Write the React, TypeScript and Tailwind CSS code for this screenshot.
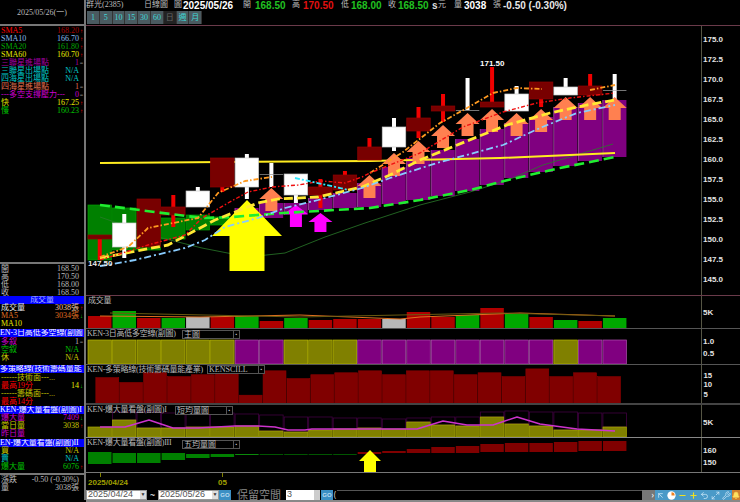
import { ReactNode } from "react";
import { ArrowUpLeft, Bell, Maximize2, Minus, Plus, Undo2, Wrench } from "lucide-react";

const ming = "font-['Liberation_Serif','Noto_Sans_CJK_TC',serif]";
const barX = (i: number) => 88 + 24.52 * i;
const midX = (i: number) => barX(i) + 11.75;

// 側欄一列
const Row = ({ label, value, mark, color, valueColor }: { label: string; value?: string; mark?: string; color: string; valueColor?: string }) => (
  <div className="flex h-[8px] w-[84px] items-center justify-between pl-[1px] text-[8px] leading-[8px] whitespace-nowrap">
    <span className={color}>{label}</span>
    <span className={"flex items-center " + (valueColor ?? color)}>
      {value}
      <span className={"w-[5px] text-center text-[6px] " + (mark === "↑" ? "text-[#ff0000]" : mark === "↓" ? "text-[#00d000]" : "text-[#999]")}>{mark}</span>
    </span>
  </div>
);

const Head = ({ children, center }: { children: ReactNode; center?: boolean }) => (
  <div className={"h-[8px] w-[84px] overflow-hidden whitespace-nowrap bg-[#0000ff] text-[8px] leading-[8px] tracking-[-0.1px] text-white " + (center ? "text-center" : "")}>{children}</div>
);

const Sidebar = () => (
  <aside className={"flex h-[500px] w-[86px] shrink-0 flex-col border-r-2 border-[#777] " + ming}>
    <div className="flex h-[26px] w-[84px] items-center justify-center border-b-2 border-[#777] pt-[1px] text-[8px] text-[#bbb]">2025/05/26(一)</div>
    <div className="h-[236px] pt-[1px]">
      <Row label="SMA5" value="168.20" mark="↑" color="text-[#ff0000]" valueColor="text-[#a00000]" />
      <Row label="SMA10" value="166.70" mark="↑" color="text-[#88bbee]" />
      <Row label="SMA20" value="161.80" mark="↑" color="text-[#00aa00]" />
      <Row label="SMA60" value="160.70" mark="↑" color="text-[#e8e800]" />
      <Row label="三聯星進場點" value="1" mark="=" color="text-[#a000a0]" />
      <Row label="三聯星出場點" value="N/A" color="text-[#00c8c8]" />
      <Row label="四海星出場點" value="N/A" color="text-[#00c8c8]" />
      <Row label="四海星進場點" value="1" mark="=" color="text-[#e07050]" />
      <Row label="---多空支撐壓力---" value="0" mark="=" color="text-[#d000d0]" />
      <Row label="快" value="167.25" mark="↑" color="text-[#e8e800]" />
      <Row label="慢" value="160.23" mark="↑" color="text-[#00c000]" />
    </div>
    <div className="h-[34px] border-t-2 border-[#777] pt-[1px]">
      <Row label="開" value="168.50" color="text-[#bbb]" />
      <Row label="高" value="170.50" color="text-[#bbb]" />
      <Row label="低" value="168.00" color="text-[#bbb]" />
      <Row label="收" value="168.50" color="text-[#bbb]" />
    </div>
    <div className="h-[33px]">
      <Head center><span className="text-[#aab8ff]">成交量</span></Head>
      <Row label="成交量" value="3038張" mark="↑" color="text-[#e8e8e8]" valueColor="text-[#f0c0a0]" />
      <Row label="MA5" value="3034張" mark="↓" color="text-[#e07020]" />
      <Row label="MA10" color="text-[#e8e800]" />
    </div>
    <div className="h-[36px]">
      <Head>EN-3日高低多空線(副圖</Head>
      <div className="h-[1px]" />
      <Row label="多叙" value="1" mark="=" color="text-[#d000d0]" valueColor="text-[#bbb]" />
      <Row label="空叙" value="N/A" color="text-[#00c000]" />
      <Row label="休" value="N/A" color="text-[#c8c800]" />
    </div>
    <div className="h-[40px]">
      <Head>多策略線(技術籌碼量能</Head>
      <div className="h-[1px]" />
      <Row label="------技術面---..." color="text-[#c8c800]" />
      <Row label="最高19分" value="14" mark="↓" color="text-[#ff0000]" valueColor="text-[#e8e800]" />
      <Row label="------籌碼面---..." color="text-[#c8c800]" />
      <Row label="最高14分" color="text-[#ff0000]" />
    </div>
    <div className="h-[33px] pt-[1px]">
      <Head>KEN-爆大量看盤(副圖)I</Head>
      <Row label="爆大量" value="7409" mark="↓" color="text-[#d000d0]" />
      <Row label="當日量" value="3038" mark="↑" color="text-[#c8c800]" />
      <Row label="昨日量" color="text-[#d000d0]" />
    </div>
    <div className="h-[35px] pt-[1px]">
      <Head>EN-爆大量看盤(副圖)II</Head>
      <Row label="買" value="N/A" color="text-[#c8c800]" />
      <Row label="賣" value="N/A" color="text-[#00c8c8]" />
      <Row label="爆大量" value="6076" mark="↑" color="text-[#00c000]" />
    </div>
    <div className="border-t-2 border-[#777] pt-[1px]">
      <Row label="漲跌" value="-0.50 (-0.30%)" color="text-[#bbb]" />
      <Row label="量" value="3038張" color="text-[#bbb]" />
    </div>
  </aside>
);

// 標題列
const TopBar = () => (
  <div className="h-[25px] w-[654px]">
    <div className={"flex h-[10px] items-center whitespace-nowrap text-[8px] text-[#bbb] " + ming}>
      <span className="w-[58px]">群光(2385)</span>
      <span className="w-[30px]">日線圖</span>
      <span className="w-[9px]">圖</span>
      <B c="w-[60px] text-[10.7px] text-white">2025/05/26</B>
      <span className="w-[12px]">開</span>
      <B c="w-[37px] text-[#20c020]">168.50</B>
      <span className="w-[11px]">高</span>
      <B c="w-[38px] text-[#e01010]">170.50</B>
      <span className="w-[10px]">低</span>
      <B c="w-[37px] text-[#20c020]">168.00</B>
      <span className="w-[10px]">收</span>
      <B c="w-[34px] text-[#20c020]">168.50</B>
      <B c="w-[6px] text-[#ddd]">s</B>
      <span className="w-[16px]">元</span>
      <span className="w-[10px]">量</span>
      <B c="w-[29px] text-white">3038</B>
      <span className="w-[10px]">張</span>
      <B c="text-[#e8e8e8]">-0.50 (-0.30%)</B>
    </div>
    <div className="mt-[1px] ml-[1px] flex h-[13px]">
      {["1", "5", "10", "15", "30", "60", "日", "週", "月"].map((t) => (
        <div key={t} className={"flex w-[12.8px] items-center justify-center border-r border-[#333] text-[8px] " + ming + (t === "日" ? " bg-[#222] text-[#666]" : " bg-[#4a5a60] text-[#40d8d8]")}>
          {t}
        </div>
      ))}
    </div>
  </div>
);

const B = ({ c, children }: { c: string; children: ReactNode }) => (
  <span className={"font-['Liberation_Sans',sans-serif] text-[10px] font-bold " + c}>{children}</span>
);

const Panel = ({ top, h, cls, axis, overlay, children }: { top: number; h: number; cls: string; axis: [string, number][]; overlay?: ReactNode; children: ReactNode }) => (
  <div className={"flex w-[654px] " + cls}>
    <div className="relative h-full w-[616px] border-r border-[#554] overflow-hidden">
      <svg viewBox={`86 ${top} 615 ${h}`} className="block h-full w-[615px]">
        {children}
      </svg>
      {overlay}
    </div>
    <svg viewBox={`702 ${top} 38 ${h}`} className="block h-full w-[38px]">
      {axis.map(([t, y]) => (
        <text key={t} x={703} y={y + 3} className="fill-[#e4e4e4] font-['Liberation_Sans',sans-serif] text-[8px] font-bold">
          {t}
        </text>
      ))}
    </svg>
  </div>
);

const Tag = ({ cls, children }: { cls: string; children: ReactNode }) => (
  <span className={"absolute whitespace-nowrap text-[8px] leading-[8px] tracking-[-0.25px] text-[#bbb] " + ming + " " + cls}>{children}</span>
);

const Combo = ({ cls, text }: { cls: string; text: string }) => (
  <div className={"absolute flex h-[9px] items-center justify-between border border-[#555] bg-black pl-[1px] text-[8px] leading-[8px] text-[#bbb] " + ming + " " + cls}>
    {text}
    <span className="flex h-full w-[6px] items-center justify-center border-l border-[#555] text-[5px]">▪</span>
  </div>
);

const Rect = ({ i, top, bot, fill, stroke }: { i: number; top: number; bot: number; fill: string; stroke?: string }) => (
  <rect x={barX(i)} y={top} width={23.5} height={bot - top} fill={fill} stroke={stroke} strokeWidth={stroke ? 0.7 : 0} />
);

const Arrow = ({ x, top, bot, w, head, shaft, fill }: { x: number; top: number; bot: number; w: number; head: number; shaft: number; fill: string }) => (
  <polygon
    fill={fill}
    points={`${x},${top} ${x + w / 2},${top + head} ${x + shaft / 2},${top + head} ${x + shaft / 2},${bot} ${x - shaft / 2},${bot} ${x - shaft / 2},${top + head} ${x - w / 2},${top + head}`}
  />
);

const Line = ({ d, color, w, dash }: { d: string; color: string; w: number; dash?: string }) => (
  <polyline points={d} fill="none" stroke={color} strokeWidth={w} strokeDasharray={dash} strokeLinejoin="round" />
);

const greenBand: [number, number, number][] = [[0, 205, 260], [1, 208, 250], [2, 210, 250], [3, 218, 239], [4, 215, 230], [5, 217, 225]];
const purpleBand: [number, number, number][] = [
  [6, 208, 222], [7, 203, 218], [8, 203, 215], [9, 198, 210], [10, 193, 208], [11, 183, 207], [12, 167, 204], [13, 158, 200],
  [14, 150, 196], [15, 139, 191], [16, 129, 185], [17, 123, 178], [18, 117, 172], [19, 107, 166], [20, 103, 161], [21, 100, 157],
];

// i, 上影, 下影, 實體上, 實體下, 白K
const candles: [number, number, number, number, number, boolean][] = [
  [0, 235, 260, 235, 239, false],
  [1, 214, 258, 223, 247, true],
  [2, 199, 247, 199, 247, false],
  [3, 195, 227, 207, 215, false],
  [4, 187, 207, 191, 207, true],
  [5, 158, 192, 158, 187, false],
  [6, 154, 199, 158, 187, true],
  [8, 174, 203, 174, 195, true],
  [9, 179, 208, 187, 195, false],
  [10, 171, 190, 175, 190, false],
  [11, 138, 160, 147, 160, false],
  [12, 118, 151, 127, 147, true],
  [13, 107, 138, 118, 131, false],
  [14, 94, 122, 106, 111, false],
  [16, 67, 107, 102, 107, false],
  [17, 86, 111, 94, 111, true],
  [18, 82, 107, 82, 99, false],
  [19, 78, 95, 87, 95, true],
  [20, 74, 95, 86, 95, false],
];

const salmon: [number, number][] = [[7, 188], [11, 175], [12, 153], [13, 141], [14, 125], [15, 113], [16, 109], [17, 113], [18, 109], [19, 97], [20, 97], [21, 97]];

const MainChart = () => (
  <Panel
    top={26}
    h={269}
    cls="h-[271px] border-y border-[#6a3a4a]"
    axis={[["175.0", 39], ["172.5", 59], ["170.0", 79], ["167.5", 99], ["165.0", 119], ["162.5", 139], ["160.0", 159], ["157.5", 179], ["155.0", 199], ["152.5", 219], ["150.0", 239], ["147.5", 259], ["145.0", 279]]}
  >
    {greenBand.map(([i, t, b]) => <Rect key={i} i={i} top={t} bot={b} fill="#008000" stroke="#00a000" />)}
    {purpleBand.map(([i, t, b]) => (
      <g key={i}>
        <Rect i={i} top={t} bot={b} fill="#800080" />
        <rect x={barX(i) - 0.5} y={t} width={0.8} height={b - t} fill="#a850a8" />
      </g>
    ))}
    <Line d="100,217 158,237 202,248 248,257 285,253 325,237 365,223 420,205 470,192 508,180 543,165 613,144" color="#2a7a2a" w={0.8} />
    <Line d="100,163 370,161 500,158 615,153" color="#ffec20" w={2} />
    {candles.map(([i, wt, wb, bt, bb, white]) => (
      <g key={i}>
        <rect x={midX(i) - 2} y={wt} width={4} height={wb - wt} fill={white ? "#ffffff" : "#f00000"} />
        <Rect i={i} top={bt} bot={bb} fill={white ? "#ffffff" : "#780000"} stroke={white ? "#cccccc" : "#900000"} />
      </g>
    ))}
    <rect x={midX(7) - 2} y={163} width={4} height={24} fill="#fff" />
    <rect x={barX(7)} y={174} width={23.5} height={0.7} fill="#999" />
    <rect x={midX(15) - 2} y={78} width={4} height={32} fill="#fff" />
    <rect x={barX(15)} y={110} width={23.5} height={0.7} fill="#aaa" />
    <rect x={midX(21) - 2} y={74} width={4} height={27} fill="#fff" />
    <rect x={barX(21)} y={90} width={23.5} height={0.7} fill="#aaa" />
    {salmon.map(([i, t]) => <Arrow key={i} x={midX(i)} top={t} bot={t + 23} w={24} head={11} shaft={12} fill="#ff8050" />)}
    <Arrow x={midX(8)} top={205} bot={227} w={24} head={9} shaft={12} fill="#ff00ff" />
    <Arrow x={midX(9)} top={213} bot={232} w={24} head={9} shaft={12} fill="#ff00ff" />
    <Arrow x={247} top={200} bot={271} w={70} head={36} shaft={35} fill="#ffff00" />
    <Line d="100,205 202,218 232,217 283,213 370,208 420,200 470,190 508,180 560,168 615,157" color="#20ee30" w={2.6} dash="10 5" />
    <Line d="100,258 168,245 215,220 258,203 278,199 318,197 362,187 390,175 420,160 477,137 507,125 550,113 587,105 615,100" color="#ffe833" w={2.8} dash="9 4" />
    <Line d="100,266 108,265 135,260 185,248 205,240 225,227 258,218 285,208 318,200 362,188 390,178 437,163 503,145 540,128 577,113 615,105" color="#88ccff" w={1.8} dash="7 3 2 3" />
    <Line d="100,257 128,247 148,228 198,218 218,193 245,181 272,177" color="#ff9a20" w={1.8} dash="5 2 1.5 2" />
    <Line d="370,173 403,152 440,123 467,108 493,93 517,88 542,89" color="#ff9a20" w={1.8} dash="5 2 1.5 2" />
    <Line d="590,90 615,85" color="#ff9a20" w={1.8} dash="5 2 1.5 2" />
    <Line d="100,260 148,245 185,235 202,218 228,203 248,192 272,187 298,185 322,181 345,183 362,177 370,173 420,153 463,127 503,112 537,103 570,98 615,93" color="#f01010" w={1.4} dash="4 2 1.5 2" />
    <Line d="295,178 340,188 348,190" color="#33e8ff" w={1.8} dash="5 2 2 2" />
    <text x={480} y={66} className="fill-white font-['Liberation_Sans',sans-serif] text-[8px] font-bold">171.50</text>
    <text x={88} y={266} className="fill-[#e8e8e8] font-['Liberation_Sans',sans-serif] text-[8px] font-bold">147.50</text>
  </Panel>
);

const volume: [number, string][] = [
  [316, "r"], [311, "g"], [318, "r"], [318, "g"], [317, "s"], [317, "r"], [316, "g"], [321, "r"], [318, "g"], [320, "r"], [319, "r"],
  [319, "r"], [319, "s"], [312, "r"], [317, "r"], [315, "g"], [308, "r"], [314, "g"], [317, "r"], [320, "g"], [321, "r"], [318, "g"],
];
const volFill: Record<string, string> = { r: "#b00000", g: "#00a800", s: "#b8b8b8" };

const VolumePanel = () => (
  <Panel top={296} h={32} cls="h-[33px] border-b border-[#555]" axis={[["5K", 312]]} overlay={<Tag cls="left-[2px] top-[1px]">成交量</Tag>}>
    {volume.map(([t, k], i) => <rect key={i} x={barX(i)} y={t} width={23.5} height={328 - t} fill={volFill[k]} />)}
    <Line d="100,316 200,317 300,315 400,319 420,317 520,313 615,316" color="#e07020" w={1} />
    <Line d="110,313 300,317 500,313 615,316" color="#6a5a10" w={1} />
  </Panel>
);

const olive3 = [0, 1, 2, 3, 4, 5, 8, 9, 10, 19];

const ThreeDayPanel = () => (
  <Panel
    top={329}
    h={35}
    cls="h-[36px] border-b border-[#555]"
    axis={[["1.0", 341], ["0.5", 353]]}
    overlay={<><Tag cls="left-[1px] top-[1px]">KEN-3日高低多空線(副圖)</Tag><Combo cls="left-[96px] top-[1px] w-[58px]" text="主圖" /></>}
  >
    {Array.from({ length: 22 }, (_, i) => (
      <Rect key={i} i={i} top={340} bot={364} fill={olive3.includes(i) ? "#808000" : "#800080"} stroke={olive3.includes(i) ? "#b8b800" : "#b050b0"} />
    ))}
  </Panel>
);

const strategy = [378, 383, 373, 377, 375, 373, 396, 371, 379, 375, 373, 371, 375, 371, 371, 375, 373, 377, 369, 377, 373, 377];

const StrategyPanel = () => (
  <Panel
    top={365}
    h={39}
    cls="h-[40px] border-b-2 border-[#444]"
    axis={[["15", 375], ["10", 385], ["5", 395]]}
    overlay={<><Tag cls="left-[1px] top-[1px]">KEN-多策略線(技術籌碼量能產業)</Tag><Combo cls="left-[121px] top-[0px] w-[58px]" text="KENSCILL" /></>}
  >
    {strategy.map((t, i) => <rect key={i} x={barX(i)} y={t} width={23.5} height={405 - t} fill="#800000" stroke="#900000" strokeWidth={0.6} />)}
  </Panel>
);

const boomBars = [427, 420, 428, 428, 427, 427, 426, 431, 432, 430, 429, 428, 429, 422, 425, 426, 417, 424, 426, 430, 430, 427];
const boomBox = [428, 412, 412, 413, 413, 413, 414, 415, 417, 417, 418, 418, 419, 418, 417, 417, 412, 411, 412, 412, 413, 413];

const BoomOnePanel = () => (
  <Panel
    top={405}
    h={32}
    cls="h-[33px] border-b border-[#888]"
    axis={[["5K", 422]]}
    overlay={<><Tag cls="left-[1px] top-[1px]">KEN-爆大量看盤(副圖)I</Tag><Combo cls="left-[89px] top-[1px] w-[58px]" text="短均量圖" /></>}
  >
    {boomBars.map((t, i) => (
      <g key={i}>
        <rect x={barX(i)} y={boomBox[i]} width={23.5} height={Math.max(t - boomBox[i], 0)} fill="none" stroke="#400040" strokeWidth={0.8} />
        <Rect i={i} top={t} bot={437} fill="#808000" stroke="#a8a800" />
      </g>
    ))}
    <Line d="100,427 125,427 149,420 173,428 198,428 235,426 258,426 275,427 288,430 305,430 312,429 358,429 382,429 417,429 443,421 467,425 493,425 517,417 540,424 577,429 615,431" color="#cc33cc" w={1.4} />
  </Panel>
);

const boomTwo: [number, number, string][] = [
  [452, 464, "#008000"], [453, 463, "#008000"], [453, 463, "#008000"], [453, 460, "#008000"], [454, 458, "#008000"], [454, 457, "#008000"], [454, 455, "#0a8a0a"],
  [454, 455, "#005500"], [454, 455, "#005500"], [454, 455, "#005500"], [454, 455, "#005500"],
  [452, 454, "#800000"], [451, 453, "#800000"], [449, 453, "#800000"], [447, 453, "#800000"], [446, 453, "#800000"], [444, 452, "#800000"], [443, 452, "#800000"], [443, 452, "#800000"], [442, 452, "#800000"], [441, 451, "#800000"], [441, 451, "#800000"],
];

const BoomTwoPanel = () => (
  <Panel
    top={438}
    h={34}
    cls="h-[35px] border-b border-[#777]"
    axis={[["160", 450], ["150", 462]]}
    overlay={<><Tag cls="left-[1px] top-[1px]">KEN-爆大量看盤(副圖)III</Tag><Combo cls="left-[96px] top-[2px] w-[58px]" text="五均量圖" /></>}
  >
    {boomTwo.map(([t, b, c], i) => <rect key={i} x={barX(i)} y={t} width={23.5} height={b - t} fill={c} />)}
    <Arrow x={370} top={450} bot={473} w={22} head={11} shaft={12} fill="#ffff00" />
  </Panel>
);

const DateAxis = () => (
  <div className="flex h-[17px] w-[654px] font-['Liberation_Sans',sans-serif] text-[8px] font-bold text-[#a0a000]">
    <div className="ml-[2px] w-[130px]">
      <div className="ml-[12px] h-[4px] w-px bg-[#808000]" />
      <span className="leading-[10px]">2025/04/24</span>
    </div>
    <div>
      <div className="ml-[4px] h-[4px] w-px bg-[#808000]" />
      <span className="leading-[10px]">05</span>
    </div>
  </div>
);

const Btn = ({ children }: { children: ReactNode }) => (
  <div className="flex h-[10px] w-[11px] shrink-0 items-center justify-center bg-[#4a9ac8]">{children}</div>
);

const DateBox = ({ value }: { value: string }) => (
  <div className="flex h-[10px] w-[61px] items-center justify-between border border-[#999] bg-white pl-[1px] font-['Liberation_Sans',sans-serif] text-[9px] text-[#555]">
    {value}
    <span className="flex h-full w-[6px] items-center justify-center bg-[#ddd] text-[5px] text-[#333]">▼</span>
  </div>
);

const Go = () => (
  <div className="flex h-[10px] w-[12px] items-center justify-center bg-[#3b8fc4] font-['Liberation_Sans',sans-serif] text-[6px] font-bold text-[#bcdcf0]">GO</div>
);

const BottomBar = () => (
  <div className="flex h-[12px] w-[654px] items-start border-b-2 border-[#888]">
    <DateBox value="2025/04/24" />
    <span className="w-[11px] text-center text-[9px] leading-[10px] text-white">~</span>
    <DateBox value="2025/05/26" />
    <Go />
    <span className={"ml-[6px] w-[49px] text-[11px] leading-[10px] text-[#888] " + ming}>保留空間</span>
    <div className="flex h-[10px] w-[34px] items-center justify-between bg-white pl-[1px] font-['Liberation_Sans',sans-serif] text-[9px] text-[#555]">
      3
      <span className="h-full w-[6px] bg-[#ccc]" />
    </div>
    <div className="ml-[1px]"><Go /></div>
    <span className="w-[4px] text-center text-[8px] leading-[10px] text-[#ccc]">(</span>
    <div className="h-[10px] w-[305px] border-t border-[#555]" />
    <div className="flex h-[10px] w-[13px] shrink-0 items-center justify-end bg-[#777] pr-[1px] text-[8px] leading-[8px] text-white">›</div>
    <Btn><ArrowUpLeft size={9} color="#cde8f8" /></Btn>
    <Btn>
      <svg width="9" height="9" viewBox="0 0 10 10">
        <circle cx="5" cy="5" r="4.6" fill="#fff" />
        <path d="M5 5V1.5A3.5 3.5 0 0 1 8.5 5Z" fill="#f08020" />
      </svg>
    </Btn>
    <Btn><Minus size={9} color="#f0e020" strokeWidth={3} /></Btn>
    <Btn><Plus size={9} color="#f0e020" strokeWidth={3} /></Btn>
    <Btn><Undo2 size={9} color="#cde8f8" /></Btn>
    <Btn><Maximize2 size={9} color="#cde8f8" /></Btn>
    <Btn><Wrench size={9} color="#cde8f8" /></Btn>
    <div className="flex h-[10px] w-[8px] items-center justify-center overflow-hidden bg-[#d08030]"><Bell size={9} color="#ffe060" fill="#ffe060" /></div>
  </div>
);

export default function App() {
  return (
    <div className="flex h-[502px] w-[740px] overflow-hidden bg-black">
      <Sidebar />
      <main className="flex w-[654px] flex-col">
        <TopBar />
        <MainChart />
        <VolumePanel />
        <ThreeDayPanel />
        <StrategyPanel />
        <BoomOnePanel />
        <BoomTwoPanel />
        <DateAxis />
        <BottomBar />
      </main>
    </div>
  );
}
